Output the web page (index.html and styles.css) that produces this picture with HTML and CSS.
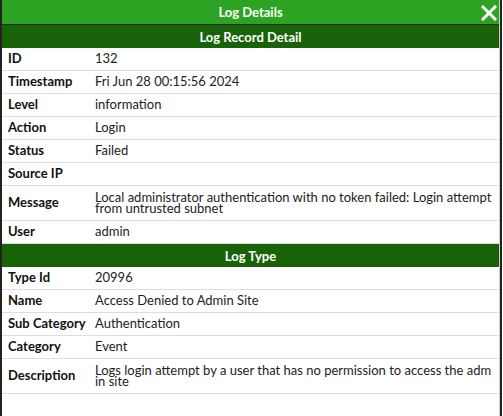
FILE: index.html
```html
<!DOCTYPE html>
<html>
<head>
<meta charset="utf-8">
<link rel="stylesheet" href="styles.css">
</head>
<body>
<div class="dialog">
  <div class="panel">
    <div class="title">
      <span>Log Details</span>
      <button class="close" aria-label="Close">
        <svg width="16" height="16" viewBox="0 0 16 16"><path d="M2 2 L14 14 M14 2 L2 14" stroke="#fff" stroke-width="3" stroke-linecap="square"/></svg>
      </button>
    </div>
    <table class="detail">
      <colgroup><col class="kcol"><col></colgroup>
      <tr class="section"><th colspan="2">Log Record Detail</th></tr>
      <tr><td class="k">ID</td><td class="v">132</td></tr>
      <tr><td class="k">Timestamp</td><td class="v">Fri Jun 28 00:15:56 2024</td></tr>
      <tr><td class="k">Level</td><td class="v">information</td></tr>
      <tr><td class="k">Action</td><td class="v">Login</td></tr>
      <tr><td class="k">Status</td><td class="v">Failed</td></tr>
      <tr><td class="k">Source IP</td><td class="v"></td></tr>
      <tr class="tall"><td class="k">Message</td><td class="v">Local administrator authentication with no token failed: Login attempt from untrusted subnet</td></tr>
      <tr><td class="k">User</td><td class="v">admin</td></tr>
      <tr class="section"><th colspan="2">Log Type</th></tr>
      <tr><td class="k">Type Id</td><td class="v">20996</td></tr>
      <tr><td class="k">Name</td><td class="v">Access Denied to Admin Site</td></tr>
      <tr><td class="k">Sub Category</td><td class="v">Authentication</td></tr>
      <tr><td class="k">Category</td><td class="v">Event</td></tr>
      <tr class="tall"><td class="k">Description</td><td class="v">Logs login attempt by a user that has no permission to access the admin site</td></tr>
    </table>
  </div>
</div>
</body>
</html>
```
FILE: styles.css
```css
html, body {
  margin: 0;
  padding: 0;
  background: #fff;
}
body {
  font-family: Lato, "Open Sans", sans-serif;
  font-size: 13px;
  color: #222;
}
.dialog {
  width: 498px;
  height: 416px;
  border-left: 2px solid #222;
  border-right: 2px solid #222;
  box-sizing: content-box;
}
.panel {
  height: 100%;
  border-right: 1px solid #cfcfcf;
  box-sizing: border-box;
}
.title {
  position: relative;
  height: 24px;
  background: #2ca322;
  border-bottom: 1px solid #2a2a2a;
  display: flex;
  align-items: center;
  justify-content: center;
  color: #fff;
  font-weight: bold;
  font-size: 13px;
}
.close {
  position: absolute;
  right: 1px;
  top: 4px;
  width: 18px;
  height: 18px;
  padding: 0;
  border: 0;
  background: transparent;
  display: flex;
  align-items: center;
  justify-content: center;
}
.detail {
  width: 100%;
  border-collapse: collapse;
  table-layout: fixed;
}
.kcol {
  width: 93px;
}
.section th {
  height: 23px;
  padding: 0;
  background: #186307;
  color: #fff;
  font-weight: bold;
  font-size: 13px;
  text-align: center;
}
.detail td {
  height: 21px;
  padding: 0 0 1px 0;
  border-bottom: 1px solid #dedede;
  vertical-align: middle;
  line-height: 11px;
}
.detail tr.tall td {
  height: 33px;
}
.k {
  padding-left: 6px !important;
  font-weight: bold;
  color: #111;
  white-space: nowrap;
}
.v {
  padding-right: 6px !important;
  word-break: break-all;
  color: #222;
}
```
